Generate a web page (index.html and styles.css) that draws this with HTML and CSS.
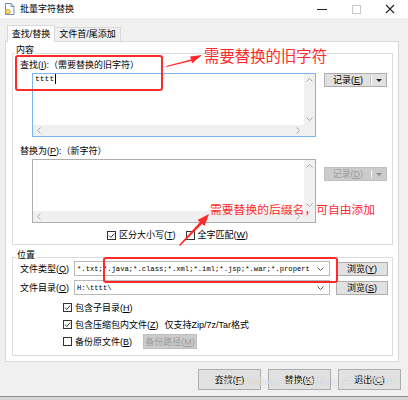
FILE: index.html
```html
<!DOCTYPE html>
<html lang="zh-CN">
<head>
  <meta charset="UTF-8" />
  <title>批量字符替换</title>
  <link rel="stylesheet" href="styles.css">
</head>
<body>
<div class="window">
  <div class="title-bar">
    <svg class="app-icon" viewBox="0 0 11 12">
      <path d="M1.5 0.5h5.5l3 3v8h-8.5z" fill="#fff" stroke="#6d8fb8"/>
      <path d="M7 0.5v3h3" fill="none" stroke="#6d8fb8"/>
      <circle cx="4" cy="8.5" r="2.6" fill="#f2b233"/>
      <circle cx="4" cy="8.5" r="1" fill="#fff"/>
    </svg>
    <span class="title">批量字符替换</span>
    <div class="controls">
      <svg viewBox="0 0 10 10"><path d="M0 5.5h10" stroke="#222" stroke-width="1"/></svg>
      <svg viewBox="0 0 10 10"><rect x="1.5" y="1.5" width="8" height="8" fill="none" stroke="#c8c8c8"/></svg>
      <svg viewBox="0 0 10 10"><path d="M1 1l8 8M9 1l-8 8" stroke="#222" stroke-width="1.1"/></svg>
    </div>
  </div>

  <div class="tabs">
    <div class="tab active">查找/替换</div>
    <div class="tab">文件首/尾添加</div>
  </div>

  <div class="panel">
    <!-- 内容 -->
    <div class="group group-content">
      <span class="group-title">内容</span>
      <div class="label">查找(<u>I</u>):（需要替换的旧字符）</div>
      <div class="edit-row">
        <div class="edit focused">
          <div class="edit-text">tttt<span class="caret"></span></div>
          <div class="vscroll">
            <svg viewBox="0 0 7 4"><path d="M0.5 3.5l3-3 3 3" fill="none" stroke="#a6a6a6"/></svg>
            <svg viewBox="0 0 7 4"><path d="M0.5 0.5l3 3 3-3" fill="none" stroke="#a6a6a6"/></svg>
          </div>
          <div class="hscroll">
            <svg viewBox="0 0 4 7"><path d="M3.5 0.5l-3 3 3 3" fill="none" stroke="#a6a6a6"/></svg>
            <svg viewBox="0 0 4 7"><path d="M0.5 0.5l3 3-3 3" fill="none" stroke="#a6a6a6"/></svg>
          </div>
          <div class="corner"></div>
        </div>
        <div class="split-btn">
          <span class="split-text">记录(<u>E</u>)</span>
          <span class="sep"></span>
          <span class="drop"></span>
        </div>
      </div>

      <div class="label label-gap">替换为(<u>P</u>):（新字符）</div>
      <div class="edit-row">
        <div class="edit">
          <div class="edit-text"></div>
          <div class="vscroll">
            <svg viewBox="0 0 7 4"><path d="M0.5 3.5l3-3 3 3" fill="none" stroke="#a6a6a6"/></svg>
            <svg viewBox="0 0 7 4"><path d="M0.5 0.5l3 3 3-3" fill="none" stroke="#a6a6a6"/></svg>
          </div>
          <div class="hscroll">
            <svg viewBox="0 0 4 7"><path d="M3.5 0.5l-3 3 3 3" fill="none" stroke="#a6a6a6"/></svg>
            <svg viewBox="0 0 4 7"><path d="M0.5 0.5l3 3-3 3" fill="none" stroke="#a6a6a6"/></svg>
          </div>
          <div class="corner"></div>
        </div>
        <div class="split-btn disabled second">
          <span class="split-text">记录(<u>D</u>)</span>
          <span class="sep"></span>
          <span class="drop"></span>
        </div>
      </div>

      <div class="check-row options">
        <label class="check">
          <svg class="box" viewBox="0 0 9 9"><rect x="0.5" y="0.5" width="8" height="8" fill="#fff" stroke="#333"/><path d="M2 4.6l1.8 1.8 3.4-3.8" fill="none" stroke="#333" stroke-width="1"/></svg>
          <span>区分大小写(<u>T</u>)</span>
        </label>
        <label class="check">
          <svg class="box" viewBox="0 0 9 9"><rect x="0.5" y="0.5" width="8" height="8" fill="#fff" stroke="#333"/></svg>
          <span>全字匹配(<u>W</u>)</span>
        </label>
      </div>
    </div>

    <!-- 位置 -->
    <div class="group group-place">
      <span class="group-title">位置</span>
      <div class="field-row">
        <span class="field-label">文件类型(<u>Q</u>)</span>
        <div class="combo">
          <span class="combo-text">*.txt;*.java;*.class;*.xml;*.iml;*.jsp;*.war;*.propert</span>
          <svg viewBox="0 0 7 4"><path d="M0.5 0.5l3 3 3-3" fill="none" stroke="#555"/></svg>
        </div>
        <button class="btn browse">浏览(<u>Y</u>)</button>
      </div>
      <div class="field-row second">
        <span class="field-label">文件目录(<u>O</u>)</span>
        <div class="combo">
          <span class="combo-text">H:\tttt\</span>
          <svg viewBox="0 0 7 4"><path d="M0.5 0.5l3 3 3-3" fill="none" stroke="#555"/></svg>
        </div>
        <button class="btn browse">浏览(<u>S</u>)</button>
      </div>

      <div class="check-list">
        <div class="check-row">
          <label class="check">
            <svg class="box" viewBox="0 0 9 9"><rect x="0.5" y="0.5" width="8" height="8" fill="#fff" stroke="#333"/><path d="M2 4.6l1.8 1.8 3.4-3.8" fill="none" stroke="#333" stroke-width="1"/></svg>
            <span>包含子目录(<u>H</u>)</span>
          </label>
        </div>
        <div class="check-row">
          <label class="check">
            <svg class="box" viewBox="0 0 9 9"><rect x="0.5" y="0.5" width="8" height="8" fill="#fff" stroke="#333"/><path d="M2 4.6l1.8 1.8 3.4-3.8" fill="none" stroke="#333" stroke-width="1"/></svg>
            <span>包含压缩包内文件(<u>Z</u>)</span>
          </label>
          <span class="note">仅支持Zip/7z/Tar格式</span>
        </div>
        <div class="check-row">
          <label class="check">
            <svg class="box" viewBox="0 0 9 9"><rect x="0.5" y="0.5" width="8" height="8" fill="#fff" stroke="#333"/></svg>
            <span>备份原文件(<u>B</u>)</span>
          </label>
          <button class="btn disabled backup">备份路径(<u>M</u>)</button>
        </div>
      </div>
    </div>
  </div>

  <div class="actions">
    <button class="btn action">查找(<u>F</u>)</button>
    <button class="btn action">替换(<u>K</u>)</button>
    <button class="btn action">退出(<u>C</u>)</button>
  </div>
</div>

<div class="watermark">https://blog.csdn.net/qq_41712834</div>

<!-- annotations -->
<div class="mark mark-find"></div>
<svg class="arrow arrow-find" viewBox="0 0 40 18">
  <polygon points="2,15 27,8.5 26,5.5 38,4 28,12.5 27.5,10 2.5,16" fill="#ff2a2a"/>
</svg>
<div class="note-red note-find">需要替换的旧字符</div>

<div class="mark mark-type"></div>
<svg class="arrow arrow-type" viewBox="0 0 36 36">
  <polygon points="3,33 24,10 21.5,8 33,2 28.5,14 26,12 4,34" fill="#ff2a2a"/>
</svg>
<div class="note-red note-type">需要替换的后缀名，可自由添加</div>
</body>
</html>
```

FILE: styles.css
```css
* {
  box-sizing: border-box;
}

html, body {
  margin: 0;
  padding: 0;
}

body {
  width: 408px;
  height: 400px;
  overflow: hidden;
  position: relative;
  background: #d6d6d6;
  font-family: "Liberation Sans", "Noto Sans CJK SC", sans-serif;
  font-size: 9px;
  color: #000;
}

u {
  text-decoration: underline;
}

.window {
  height: 397px;
  background: #f0f0f0;
  border-bottom: 1px solid #8e8e8e;
}

/* title bar */
.title-bar {
  height: 18px;
  background: #fff;
  display: flex;
  align-items: center;
  padding-left: 4px;
}

.app-icon {
  width: 11px;
  height: 12px;
}

.title {
  margin-left: 5px;
  font-size: 9px;
  line-height: 12px;
}

.controls {
  margin-left: auto;
  display: flex;
  gap: 24px;
  padding-right: 13px;
}

.controls svg {
  width: 10px;
  height: 10px;
}

/* tabs */
.tabs {
  height: 23px;
  display: flex;
  align-items: flex-end;
  padding-left: 7px;
}

.tab {
  height: 14px;
  line-height: 13px;
  width: 66px;
  text-align: center;
  border: 1px solid #d9d9d9;
  border-bottom: none;
  border-left: none;
  background: #f0f0f0;
}

.tab.active {
  width: 48px;
  height: 17px;
  line-height: 16px;
  margin-bottom: -1px;
  border-left: 1px solid #d9d9d9;
  background: #fff;
  position: relative;
  z-index: 1;
}

.panel {
  margin-left: 5px;
  width: 394px;
  height: 321px;
  border: 1px solid #d9d9d9;
  background: #fff;
  padding: 11px 5px 0 6px;
}

/* group boxes */
.group {
  position: relative;
  border: 1px solid #dcdcdc;
  padding: 4px 0 0 7px;
}

.group-content {
  height: 192px;
}

.group-place {
  height: 99px;
  margin-top: 12px;
  padding-top: 3px;
}

.group-title {
  position: absolute;
  left: 2px;
  top: -10px;
  line-height: 12px;
  padding: 0 1px;
  background: #fff;
}

.group-place .group-title {
  left: 3px;
  top: -9px;
}

.label {
  line-height: 14px;
}

.label-gap {
  margin-top: 7px;
}

.edit-row {
  display: flex;
  align-items: flex-start;
  margin-top: 1px;
}

.edit {
  margin-left: 12px;
  width: 284px;
  height: 64px;
  border: 1px solid #adadad;
  background: #fff;
  display: grid;
  grid-template-columns: 1fr 11px;
  grid-template-rows: 1fr 11px;
}

.edit.focused {
  border-color: #7ab4ec;
}

.edit-text {
  padding: 0 2px;
  font-family: "Liberation Mono", monospace;
  font-size: 8px;
  line-height: 10px;
  display: flex;
  align-items: center;
  height: 10px;
}

.caret {
  width: 1px;
  height: 10px;
  background: #000;
  margin-left: 1px;
}

.vscroll {
  background: #f0f0f0;
  display: flex;
  flex-direction: column;
  justify-content: space-between;
  align-items: center;
  padding: 4px 0;
}

.vscroll svg {
  width: 7px;
  height: 4px;
}

.hscroll {
  background: #f0f0f0;
  display: flex;
  justify-content: space-between;
  align-items: center;
  padding: 0 4px;
}

.hscroll svg {
  width: 4px;
  height: 7px;
}

.corner {
  background: #f0f0f0;
}

/* split "记录" buttons */
.split-btn {
  margin-left: 8px;
  width: 63px;
  height: 14px;
  background: #e1e1e1;
  border: 1px solid #adadad;
  display: flex;
  align-items: center;
}

.split-btn.second {
  margin-top: 8px;
}

.split-text {
  flex: 1;
  text-align: right;
  padding-right: 8px;
  line-height: 12px;
}

.sep {
  width: 1px;
  height: 8px;
  background: #fff;
  box-shadow: -1px 0 0 #c4c4c4;
}

.drop {
  width: 0;
  height: 0;
  margin: 0 4px 0 4px;
  border-left: 3px solid transparent;
  border-right: 3px solid transparent;
  border-top: 3px solid #222;
}

.split-btn.disabled {
  background: #cccccc;
  border-color: #bfbfbf;
  color: #9a9a9a;
}

.split-btn.disabled .drop {
  border-top-color: #8a8a8a;
}

/* checkboxes */
.check-row {
  display: flex;
  align-items: center;
  height: 17px;
}

.options {
  margin-top: 5px;
  height: 14px;
  margin-left: 87px;
  gap: 10px;
}

.check {
  display: flex;
  align-items: center;
  gap: 3px;
  line-height: 12px;
}

.box {
  width: 9px;
  height: 9px;
}

.note {
  margin-left: 6px;
}

/* location rows */
.field-row {
  display: flex;
  align-items: center;
  height: 15px;
}

.field-row.second {
  margin-top: 4px;
}

.field-label {
  width: 54px;
  line-height: 12px;
}

.combo {
  width: 256px;
  height: 15px;
  border: 1px solid #b9b9b9;
  background: #fff;
  display: flex;
  align-items: center;
  padding: 0 5px 0 2px;
}

.combo-text {
  flex: 1;
  font-family: "Liberation Mono", monospace;
  font-size: 7.2px;
  white-space: nowrap;
  overflow: hidden;
}

.combo svg {
  width: 7px;
  height: 4px;
  margin-left: 3px;
}

.btn {
  font: inherit;
  color: #000;
  background: #e1e1e1;
  border: 1px solid #adadad;
  padding: 0;
  display: flex;
  align-items: center;
  justify-content: center;
  line-height: 12px;
}

.btn.disabled {
  background: #cccccc;
  border-color: #bfbfbf;
  color: #9a9a9a;
}

.browse {
  margin-left: 6px;
  width: 52px;
  height: 14px;
}

.check-list {
  margin-top: 4px;
  margin-left: 43px;
}

.backup {
  margin-left: 11px;
  width: 54px;
  height: 15px;
}

/* bottom buttons */
.actions {
  display: flex;
  justify-content: flex-end;
  gap: 7px;
  padding-right: 7px;
  margin-top: 7px;
}

.action {
  width: 63px;
  height: 21px;
}

.watermark {
  position: absolute;
  left: 218px;
  top: 375px;
  font-family: "Liberation Sans", sans-serif;
  font-size: 11.5px;
  color: rgba(255, 255, 255, 0.75);
  text-shadow: 0 0 1px rgba(0, 0, 0, 0.25);
  white-space: nowrap;
}

/* red annotations */
.mark {
  position: absolute;
  border: 2px solid #ff2a2a;
  border-radius: 3px;
}

.mark-find {
  left: 15px;
  top: 55px;
  width: 148px;
  height: 36px;
}

.mark-type {
  left: 103px;
  top: 257px;
  width: 235px;
  height: 26px;
}

.arrow {
  position: absolute;
}

.arrow-find {
  left: 164px;
  top: 51px;
  width: 40px;
  height: 18px;
}

.arrow-type {
  left: 176px;
  top: 212px;
  width: 36px;
  height: 36px;
}

.note-red {
  position: absolute;
  font-family: "Noto Sans CJK SC", sans-serif;
  color: #ff2a2a;
  white-space: nowrap;
}

.note-find {
  left: 204px;
  top: 45px;
  font-size: 15.4px;
  line-height: 20px;
}

.note-type {
  left: 210px;
  top: 201px;
  font-size: 11.8px;
  line-height: 16px;
}
```
